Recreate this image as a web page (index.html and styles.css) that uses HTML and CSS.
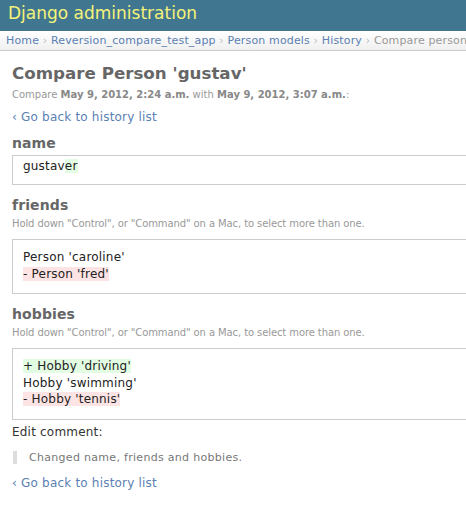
FILE: index.html
```html
<!DOCTYPE html>
<html>
<head>
<meta charset="utf-8">
<link rel="stylesheet" href="styles.css">
</head>
<body>
<div class="header">
  <h1 class="branding">Django administration</h1>
</div>
<div class="breadcrumbs">
  <a href="#">Home</a> <span class="sep">›</span> <a href="#">Reversion_compare_test_app</a> <span class="sep">›</span> <a href="#">Person models</a> <span class="sep">›</span> <a href="#">History</a> <span class="sep">›</span> Compare person models
</div>
<div class="content">
  <h1 class="title">Compare Person 'gustav'</h1>
  <p class="meta">Compare <strong>May 9, 2012, 2:24 a.m.</strong> with <strong>May 9, 2012, 3:07 a.m.</strong>:</p>
  <p class="back"><a href="#">‹ Go back to history list</a></p>

  <div class="field">
    <h2>name</h2>
    <div class="box box-single">gustav<span class="ins">er</span></div>
  </div>

  <div class="field">
    <h2>friends</h2>
    <p class="help">Hold down "Control", or "Command" on a Mac, to select more than one.</p>
    <div class="box">
      <div>Person 'caroline'</div>
      <div><span class="del">- Person 'fred'</span></div>
    </div>
  </div>

  <div class="field">
    <h2>hobbies</h2>
    <p class="help">Hold down "Control", or "Command" on a Mac, to select more than one.</p>
    <div class="box">
      <div><span class="ins">+ Hobby 'driving'</span></div>
      <div>Hobby 'swimming'</div>
      <div><span class="del">- Hobby 'tennis'</span></div>
    </div>
  </div>

  <p class="label">Edit comment:</p>
  <blockquote class="comment">Changed name, friends and hobbies.</blockquote>
  <p class="back back-bottom"><a href="#">‹ Go back to history list</a></p>
</div>
</body>
</html>
```
FILE: styles.css
```css
html, body {
  margin: 0;
  padding: 0;
}
body {
  font-family: "DejaVu Sans", Verdana, sans-serif;
  font-size: 12px;
  letter-spacing: 0.2px;
  color: #333;
  background: #fff;
  min-width: 580px;
}
a {
  color: #5b80b2;
  text-decoration: none;
}
.header {
  background: #417690;
  height: 31px;
  padding: 3px 8px 0;
  box-sizing: border-box;
}
.branding {
  margin: 0;
  font-size: 17px;
  line-height: 20px;
  font-weight: normal;
  letter-spacing: 0;
  color: #f4f379;
}
.breadcrumbs {
  height: 19px;
  line-height: 19px;
  padding: 0 6px;
  font-size: 11px;
  letter-spacing: 0.15px;
  color: #999;
  white-space: nowrap;
  background: linear-gradient(#fff, #f0f0f0);
  border-bottom: 1px solid #ccc;
  overflow: hidden;
}
.breadcrumbs .sep {
  color: #bbb;
}
.content {
  padding: 0 12px;
}
.title {
  margin: 11px 0 0;
  font-size: 16.7px;
  line-height: 22px;
  letter-spacing: 0;
  color: #666;
  font-weight: bold;
}
.meta {
  margin: 5px 0 0;
  font-size: 10px;
  line-height: 12px;
  letter-spacing: 0;
  color: #999;
}
.meta strong {
  color: #888;
}
.back {
  margin: 9px 0 0;
  font-size: 12px;
  line-height: 14px;
}
.field h2 {
  margin: 10px 0 0;
  font-size: 14px;
  line-height: 18px;
  letter-spacing: 0.1px;
  color: #666;
  font-weight: bold;
}
.field + .field h2 {
  margin-top: 11px;
}
.help {
  margin: 4px 0 0;
  font-size: 10px;
  line-height: 12px;
  letter-spacing: -0.1px;
  color: #999;
}
.box {
  margin-top: 9px;
  border: 1px solid #ccc;
  padding: 9px 10px 11px;
  line-height: 16.5px;
  color: #222;
}
.box-single {
  margin-top: 3px;
  padding: 2px 10px 10px;
  line-height: 16px;
}
.ins {
  background: #e2fde2;
}
.del {
  background: #fde4e4;
}
.label {
  margin: 5px 0 0;
  font-size: 12px;
  line-height: 14px;
  color: #333;
}
.comment {
  margin: 12px 0 0 1px;
  padding: 0 0 0 12px;
  border-left: 4px solid #ddd;
  font-size: 11px;
  line-height: 13px;
  letter-spacing: 0.3px;
  color: #777;
}
.back-bottom {
  margin-top: 12px;
}
```
